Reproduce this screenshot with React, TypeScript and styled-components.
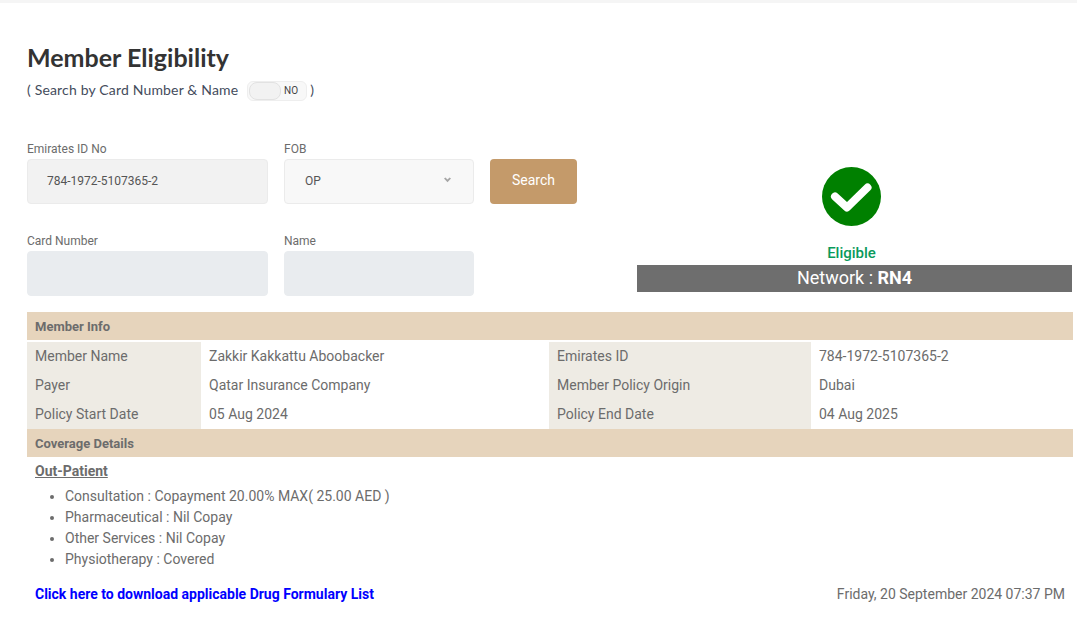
import React from "react";
import styled, { createGlobalStyle } from "styled-components";

const Global = createGlobalStyle`
  html, body { margin: 0; padding: 0; background: #fff; }
  body { font-family: Roboto, "Liberation Sans", sans-serif; color: #6c6c6c; overflow: hidden; }
`;

const Page = styled.div`
  width: 1077px;
  height: 635px;
  box-sizing: border-box;
  border-top: 3px solid #f5f5f5;
  padding: 0 4px 0 27px;
`;

const Title = styled.h1`
  margin: 37px 0 0;
  font: 700 25px/34px Lato, "Open Sans", sans-serif;
  color: #333;
`;

const SearchMode = styled.div`
  display: flex;
  align-items: center;
  height: 20px;
  margin-top: 6px;
  font: 400 14px/20px Lato, "Open Sans", sans-serif;
  letter-spacing: 0.17px;
  color: #444c5c;
`;

const Toggle = styled.div`
  display: flex;
  align-items: center;
  justify-content: space-between;
  box-sizing: border-box;
  width: 60px;
  height: 20px;
  margin: 1px 3px 0 9px;
  padding: 1px 8px 1px 1px;
  background: #f8f8f8;
  border: 1px solid #eee;
  border-radius: 6px;
  font: 400 10px/1 Roboto, sans-serif;
  color: #444;
`;

const Knob = styled.span`
  width: 30px;
  height: 16px;
  background: #f2f2f2;
  border: 1px solid #e2e2e2;
  border-radius: 8px;
`;

const Workspace = styled.div`
  display: flex;
  margin: 39px 0 16px;
`;

const Form = styled.div`
  display: grid;
  grid-template-columns: 241px 190px 87px;
  grid-auto-rows: 65px;
  column-gap: 16px;
  row-gap: 27px;
  width: 610px;
`;

const FieldCell = styled.div`
  display: flex;
  flex-direction: column;
  justify-content: flex-end;
`;

const Label = styled.label`
  font-size: 12px;
  line-height: 14px;
  color: #6c6c6c;
  margin-bottom: 3px;
`;

const Input = styled.div<{ $tone: string; $inset?: number }>`
  box-sizing: border-box;
  flex: none;
  height: 45px;
  display: flex;
  align-items: center;
  justify-content: space-between;
  padding: 0 21px 2px ${(p) => p.$inset ?? 20}px;
  background: ${(p) => p.$tone};
  border: 1px solid ${(p) => (p.$tone === "#e9ecef" ? "#e9ecef" : "#ebebeb")};
  border-radius: 4px;
  font-size: 12px;
  color: #555;
`;

const Chevron = styled.svg`
  width: 7px;
  height: 6px;
  margin: -2px 1px 0 0;
  fill: #a6a6a6;
`;

const SearchButton = styled.button`
  box-sizing: border-box;
  height: 45px;
  align-self: end;
  border: 0;
  border-radius: 4px;
  background: #c49a6a;
  color: #fff;
  font: 400 14px Roboto, sans-serif;
  padding: 0 0 3px;
`;

const Status = styled.div`
  width: 435px;
  display: flex;
  flex-direction: column;
  align-items: center;
  padding-top: 28px;
`;

const StatusIcon = styled.svg`
  width: 59px;
  height: 59px;
  margin-right: 6px;
`;

const Eligible = styled.div`
  margin: 19px 6px 0 0;
  font-size: 15px;
  line-height: 17px;
  font-weight: 500;
  color: #0a9a5b;
`;

const NetworkBar = styled.div`
  align-self: stretch;
  height: 27px;
  margin-top: 3px;
  background: #6e6e6e;
  color: #fff;
  font-size: 18px;
  line-height: 25px;
  text-align: center;
  strong { font-weight: 700; }
`;

const SectionBar = styled.div<{ $gap?: number }>`
  height: 28px;
  margin-bottom: ${(p) => p.$gap ?? 0}px;
  padding-left: 8px;
  background: #e6d4bc;
  font-size: 13px;
  font-weight: 700;
  line-height: 30px;
  color: #6c6c6c;
`;

const InfoGrid = styled.div`
  display: grid;
  grid-template-columns: 174px 348px 262px 1fr;
  grid-auto-rows: 29px;
`;

const InfoKey = styled.div`
  background: #eeebe4;
  padding-left: 8px;
  font-size: 14px;
  line-height: 29px;
`;

const InfoValue = styled.div`
  padding-left: 8px;
  font-size: 14px;
  line-height: 29px;
`;

const Coverage = styled.div`
  padding-left: 8px;
`;

const CoverageTitle = styled.div`
  margin-top: 5px;
  font-size: 14px;
  line-height: 18px;
  font-weight: 700;
  text-decoration: underline;
`;

const BenefitList = styled.ul`
  margin: 6px 0 0;
  padding: 0 0 0 30px;
`;

const Benefit = styled.li`
  font-size: 14px;
  line-height: 21px;
`;

const Footer = styled.div`
  display: flex;
  justify-content: space-between;
  margin-top: 15px;
  padding: 0 8px;
  font-size: 14px;
  line-height: 18px;
`;

const DrugLink = styled.a`
  color: #0000ff;
  font-weight: 700;
  text-decoration: none;
`;

export default function App() {
  const info = [
    ["Member Name", "Zakkir Kakkattu Aboobacker", "Emirates ID", "784-1972-5107365-2"],
    ["Payer", "Qatar Insurance Company", "Member Policy Origin", "Dubai"],
    ["Policy Start Date", "05 Aug 2024", "Policy End Date", "04 Aug 2025"],
  ];
  const benefits = [
    "Consultation : Copayment 20.00% MAX( 25.00 AED )",
    "Pharmaceutical : Nil Copay",
    "Other Services : Nil Copay",
    "Physiotherapy : Covered",
  ];
  return (
    <Page>
      <Global />
      <Title>Member Eligibility</Title>
      <SearchMode>
        ( Search by Card Number &amp; Name
        <Toggle>
          <Knob />
          NO
        </Toggle>
        )
      </SearchMode>
      <Workspace>
        <Form>
          <FieldCell>
            <Label>Emirates ID No</Label>
            <Input $tone="#f2f2f2" $inset={19}>784-1972-5107365-2</Input>
          </FieldCell>
          <FieldCell>
            <Label>FOB</Label>
            <Input $tone="#f8f8f8">
              OP
              <Chevron viewBox="0 0 8 6">
                <path d="M0 1.2 L1.6 0 L4 2.4 L6.4 0 L8 1.2 L4 5.5 Z" />
              </Chevron>
            </Input>
          </FieldCell>
          <SearchButton>Search</SearchButton>
          <FieldCell>
            <Label>Card Number</Label>
            <Input $tone="#e9ecef" />
          </FieldCell>
          <FieldCell>
            <Label>Name</Label>
            <Input $tone="#e9ecef" />
          </FieldCell>
        </Form>
        <Status>
          <StatusIcon viewBox="0 0 59 59">
            <circle cx="29.5" cy="29.5" r="29.5" fill="#008000" />
            <path d="M13 29.5 L25 40.5 L45.5 20.5" fill="none" stroke="#fff" strokeWidth="8" strokeLinecap="round" strokeLinejoin="round" />
          </StatusIcon>
          <Eligible>Eligible</Eligible>
          <NetworkBar>
            Network : <strong>RN4</strong>
          </NetworkBar>
        </Status>
      </Workspace>
      <SectionBar $gap={2}>Member Info</SectionBar>
      <InfoGrid>
        {info.flat().map((text, i) =>
          i % 2 === 0 ? <InfoKey key={i}>{text}</InfoKey> : <InfoValue key={i}>{text}</InfoValue>
        )}
      </InfoGrid>
      <SectionBar>Coverage Details</SectionBar>
      <Coverage>
        <CoverageTitle>Out-Patient</CoverageTitle>
        <BenefitList>
          {benefits.map((b) => (
            <Benefit key={b}>{b}</Benefit>
          ))}
        </BenefitList>
      </Coverage>
      <Footer>
        <DrugLink href="#">Click here to download applicable Drug Formulary List</DrugLink>
        <span>Friday, 20 September 2024 07:37 PM</span>
      </Footer>
    </Page>
  );
}
